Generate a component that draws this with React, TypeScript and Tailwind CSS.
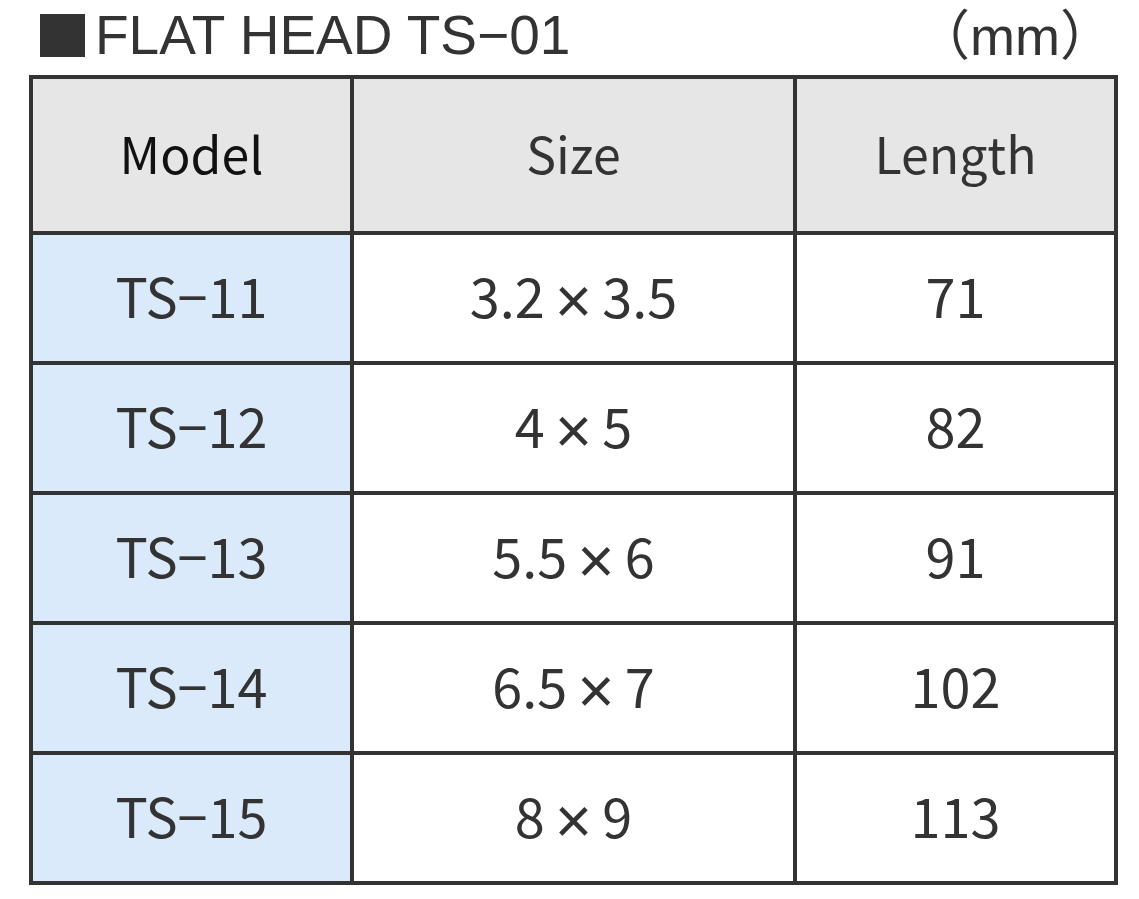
const ROWS = [
  { model: 'TS-11', size: ['3.2', '3.5'], length: '71' },
  { model: 'TS-12', size: ['4', '5'], length: '82' },
  { model: 'TS-13', size: ['5.5', '6'], length: '91' },
  { model: 'TS-14', size: ['6.5', '7'], length: '102' },
  { model: 'TS-15', size: ['8', '9'], length: '113' },
]

const font = "font-['Noto_Sans_CJK_JP',sans-serif]"
const titleFont = "font-['Liberation_Sans','Noto_Sans_CJK_JP',sans-serif]"

export default function App() {
  return (
    <div className={`w-[1139px] h-[899px] bg-white pl-[29px] text-[#333] ${font}`}>
      <div className={`w-[1089px] h-[75px] pt-[3px] flex items-start justify-between ${titleFont}`}>
        <div className="flex items-start pl-[11px]">
          <span className="w-[45px] h-[43px] bg-[#333] mr-[10px] mt-[11px]" />
          <span className="text-[55px] leading-[64px]">FLAT HEAD TS−01</span>
        </div>
        <span className="text-[54px] leading-[64px] mt-[1px] pr-[4px]">（mm）</span>
      </div>

      <div className="w-[1089px] border-[4px] border-[#333]">
        <div className="grid grid-cols-[317px_443px_321px] h-[152px] bg-[#e6e6e6] text-[50px]">
          <div className="flex items-center justify-center pb-[6px] text-[#111]">Model</div>
          <div className="flex items-center justify-center pb-[6px] border-l-[4px] border-[#333]">Size</div>
          <div className="flex items-center justify-center pb-[6px] border-l-[4px] border-[#333]">Length</div>
        </div>
        {ROWS.map((row) => (
          <div
            key={row.model}
            className="grid grid-cols-[317px_443px_321px] h-[130px] border-t-[4px] border-[#333] text-[54px]"
          >
            <div className="flex items-center justify-center pb-[8px] bg-[#dbeafb]">{row.model.replace('-', '−')}</div>
            <div className="flex items-center justify-center pb-[8px] border-l-[4px] border-[#333]">
              <span>
                {row.size[0]}
                <span className="inline-block font-['Liberation_Sans',sans-serif] text-[64px] leading-[0] mx-[10px] translate-y-[5px]">×</span>
                {row.size[1]}
              </span>
            </div>
            <div className="flex items-center justify-center pb-[8px] border-l-[4px] border-[#333]">{row.length}</div>
          </div>
        ))}
      </div>
    </div>
  )
}
